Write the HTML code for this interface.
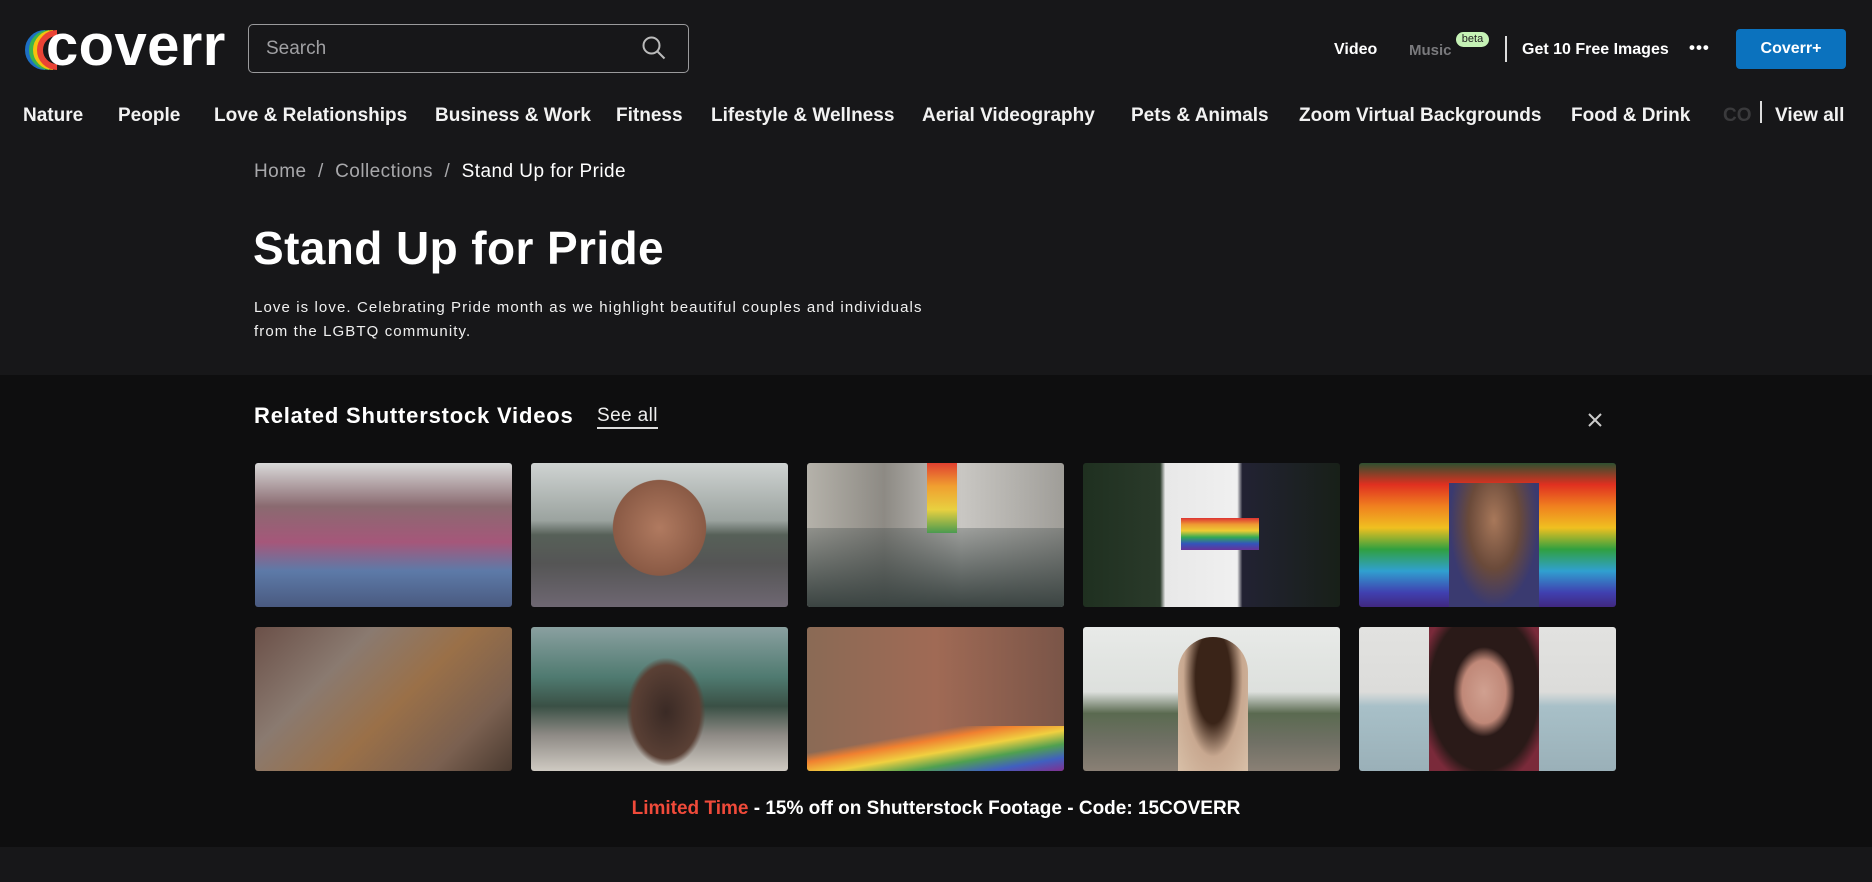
<!DOCTYPE html>
<html><head><meta charset="utf-8"><style>
*{margin:0;padding:0;box-sizing:border-box}
body{width:1872px;height:882px;background:#171719;font-family:"Liberation Sans",sans-serif;color:#fff;position:relative;overflow:hidden}
.a{position:absolute;white-space:nowrap}
.nav{top:105px;font-size:19px;font-weight:bold;color:#f2f2f2}
.hr{top:41px;font-size:16px;font-weight:bold}
.dark{position:absolute;left:0;top:375px;width:1872px;height:472px;background:#0e0e0f}
.t{position:absolute;width:257px;height:144px;border-radius:3px;overflow:hidden}
</style></head><body>
<svg class="a" style="left:21px;top:30px" width="44" height="40" viewBox="0 0 44 40">
<path d="M24 3a17 17 0 1 0 0 34" fill="none" stroke="#1d6fc4" stroke-width="6"/>
<path d="M28 3a17 17 0 1 0 0 34" fill="none" stroke="#3cb44b" stroke-width="6"/>
<path d="M32 3a17 17 0 1 0 0 34" fill="none" stroke="#f4c20d" stroke-width="6"/>
<path d="M36 3a17 17 0 1 0 0 34" fill="none" stroke="#ea4335" stroke-width="6"/>
</svg>
<div class="a" style="left:46px;top:16px;font-size:58px;font-weight:bold;letter-spacing:0.4px;line-height:60px">coverr</div>
<div class="a" style="left:248px;top:24px;width:441px;height:49px;border:1px solid #9a9a9c;border-radius:5px"></div>
<div class="a" style="left:266px;top:38px;font-size:19px;color:#a0a0a3">Search</div>
<svg class="a" style="left:641px;top:35px" width="26" height="26" viewBox="0 0 26 26"><circle cx="10.5" cy="10.5" r="8" fill="none" stroke="#bbb" stroke-width="2"/><path d="M16.5 16.5l7 7" stroke="#bbb" stroke-width="2"/></svg>

<div class="a hr" style="left:1334px">Video</div>
<div class="a hr" style="left:1409px;color:#7a7a7d;font-size:15px;top:42px">Music</div>
<div class="a" style="left:1456px;top:32px;width:33px;height:15px;border-radius:8px;background:#c6f2b6;color:#222;font-size:11px;text-align:center;line-height:15px">beta</div>
<div class="a" style="left:1505px;top:36px;width:2px;height:26px;background:#ddd"></div>
<div class="a hr" style="left:1522px">Get 10 Free Images</div>
<div class="a hr" style="left:1689px;top:38px;font-size:17px;letter-spacing:1px">•••</div>
<div class="a" style="left:1736px;top:29px;width:110px;height:40px;border-radius:4px;background:#0b72be;font-size:16px;font-weight:bold;text-align:center;line-height:40px">Coverr+</div>

<div class="a nav" style="left:23px">Nature</div>
<div class="a nav" style="left:118px">People</div>
<div class="a nav" style="left:214px">Love &amp; Relationships</div>
<div class="a nav" style="left:435px">Business &amp; Work</div>
<div class="a nav" style="left:616px">Fitness</div>
<div class="a nav" style="left:711px">Lifestyle &amp; Wellness</div>
<div class="a nav" style="left:922px">Aerial Videography</div>
<div class="a nav" style="left:1131px">Pets &amp; Animals</div>
<div class="a nav" style="left:1299px">Zoom Virtual Backgrounds</div>
<div class="a nav" style="left:1571px">Food &amp; Drink</div>
<div class="a nav" style="left:1723px;color:#3a3a3c">CO</div>
<div class="a" style="left:1760px;top:101px;width:2px;height:22px;background:#ddd"></div>
<div class="a nav" style="left:1775px">View all</div>

<div class="a" style="left:254px;top:161px;font-size:19px;color:#a8a8ab;letter-spacing:0.45px">Home&nbsp; / &nbsp;Collections&nbsp; / &nbsp;<span style="color:#fff">Stand Up for Pride</span></div>
<div class="a" style="left:253px;top:221px;font-size:46px;font-weight:bold;letter-spacing:0.4px">Stand Up for Pride</div>
<div class="a" style="left:254px;top:296px;font-size:15px;line-height:24px;color:#f0f0f0;letter-spacing:1.1px">Love is love. Celebrating Pride month as we highlight beautiful couples and individuals<br>from the LGBTQ community.</div>

<div class="dark"></div>
<div class="a" style="left:254px;top:403px;font-size:22px;font-weight:bold;letter-spacing:0.8px">Related Shutterstock Videos</div>
<div class="a" style="left:597px;top:405px;font-size:19px;color:#eee;border-bottom:2px solid #ddd;line-height:22px;letter-spacing:0.4px">See all</div>
<svg class="a" style="left:1587px;top:412px" width="16" height="16" viewBox="0 0 16 16"><path d="M2 2l12 12M14 2L2 14" stroke="#ccc" stroke-width="2"/></svg>

<div class="t" style="left:255px;top:463px;background:linear-gradient(180deg,#d9d9d9 0%,#8a6a70 30%,#a5577a 55%,#5d7aa8 75%,#4a5a80 100%)"></div>
<div class="t" style="left:531px;top:463px;background:radial-gradient(ellipse 30% 55% at 50% 45%,#b07a60 0%,#8a5a45 60%,transparent 61%),linear-gradient(180deg,#cfd3d2 0%,#9ba39f 40%,#566058 50%,#555 70%,#6e6772 100%)"></div>
<div class="t" style="left:807px;top:463px;background:linear-gradient(90deg,#b5b2aa 0%,#8d8a84 30%,#c9c7c3 60%,#9f9d98 100%);"><div style="position:absolute;left:0;bottom:0;width:100%;height:55%;background:linear-gradient(180deg,rgba(60,70,70,.3),#3b4442)"></div><div style="position:absolute;left:120px;top:0;width:30px;height:70px;background:linear-gradient(180deg,#e04030,#f0a030,#e8d040,#4a9a50)"></div></div>
<div class="t" style="left:1083px;top:463px;background:linear-gradient(90deg,#1f3020 0%,#2a3a2a 30%,#e8e8e8 32%,#f0f0f0 60%,#223 62%,#182018 100%)"><div style="position:absolute;left:98px;top:55px;width:78px;height:32px;background:linear-gradient(180deg,#d33,#e93,#ec3,#3a5,#35b,#639)"></div></div>
<div class="t" style="left:1359px;top:463px;background:linear-gradient(180deg,#2e5030 0%,#e03020 15%,#f0801f 30%,#f0c020 45%,#30a040 60%,#30a0d0 75%,#4040b0 90%,#402880 100%)"><div style="position:absolute;left:90px;top:20px;width:90px;height:124px;background:radial-gradient(ellipse at 50% 30%,#a8785a 0%,#6a4a3a 40%,#3a3a70 70%)"></div></div>

<div class="t" style="left:255px;top:627px;background:linear-gradient(135deg,#6b5048 0%,#8a7a70 30%,#9a7048 55%,#7a6050 80%,#4a3a30 100%)"></div>
<div class="t" style="left:531px;top:627px;background:linear-gradient(180deg,#8aa0a0 0%,#4f7a70 35%,#3a5045 55%,#8e8a85 75%,#cfcac2 100%)"><div style="position:absolute;left:95px;top:30px;width:80px;height:110px;background:radial-gradient(ellipse,#3a2a25 0%,#5a4035 60%,transparent 70%)"></div></div>
<div class="t" style="left:807px;top:627px;background:linear-gradient(90deg,#8a6a55 0%,#a06a55 50%,#7a5548 100%)"><div style="position:absolute;left:0;bottom:0;width:100%;height:45px;background:linear-gradient(170deg,transparent 30%,#f08030 40%,#f0d040 55%,#50a050 70%,#4060c0 85%,#803090 100%)"></div></div>
<div class="t" style="left:1083px;top:627px;background:linear-gradient(180deg,#e8eae8 0%,#dde0dd 45%,#5a6a50 60%,#707065 80%,#8a8075 100%)"><div style="position:absolute;left:95px;top:10px;width:70px;height:134px;background:radial-gradient(ellipse at 50% 30%,#3a2418 0%,#3a2418 35%,#c8a890 60%,#d8c0a8 100%);border-radius:35px 35px 0 0"></div></div>
<div class="t" style="left:1359px;top:627px;background:linear-gradient(180deg,#e2e2e0 0%,#dcdcda 45%,#a8c0c8 55%,#9ab0b8 100%)"><div style="position:absolute;left:70px;top:0;width:110px;height:144px;background:radial-gradient(ellipse at 50% 45%,#d0a090 0%,#c08878 28%,#2a1a18 40%,#2a1a18 70%,#7a2a3a 85%)"></div></div>

<div class="a" style="left:0;width:1872px;top:798px;text-align:center;font-size:19px;font-weight:bold"><span style="color:#f04a3a">Limited Time</span> - 15% off on Shutterstock Footage - Code: 15COVERR</div>
</body></html>
